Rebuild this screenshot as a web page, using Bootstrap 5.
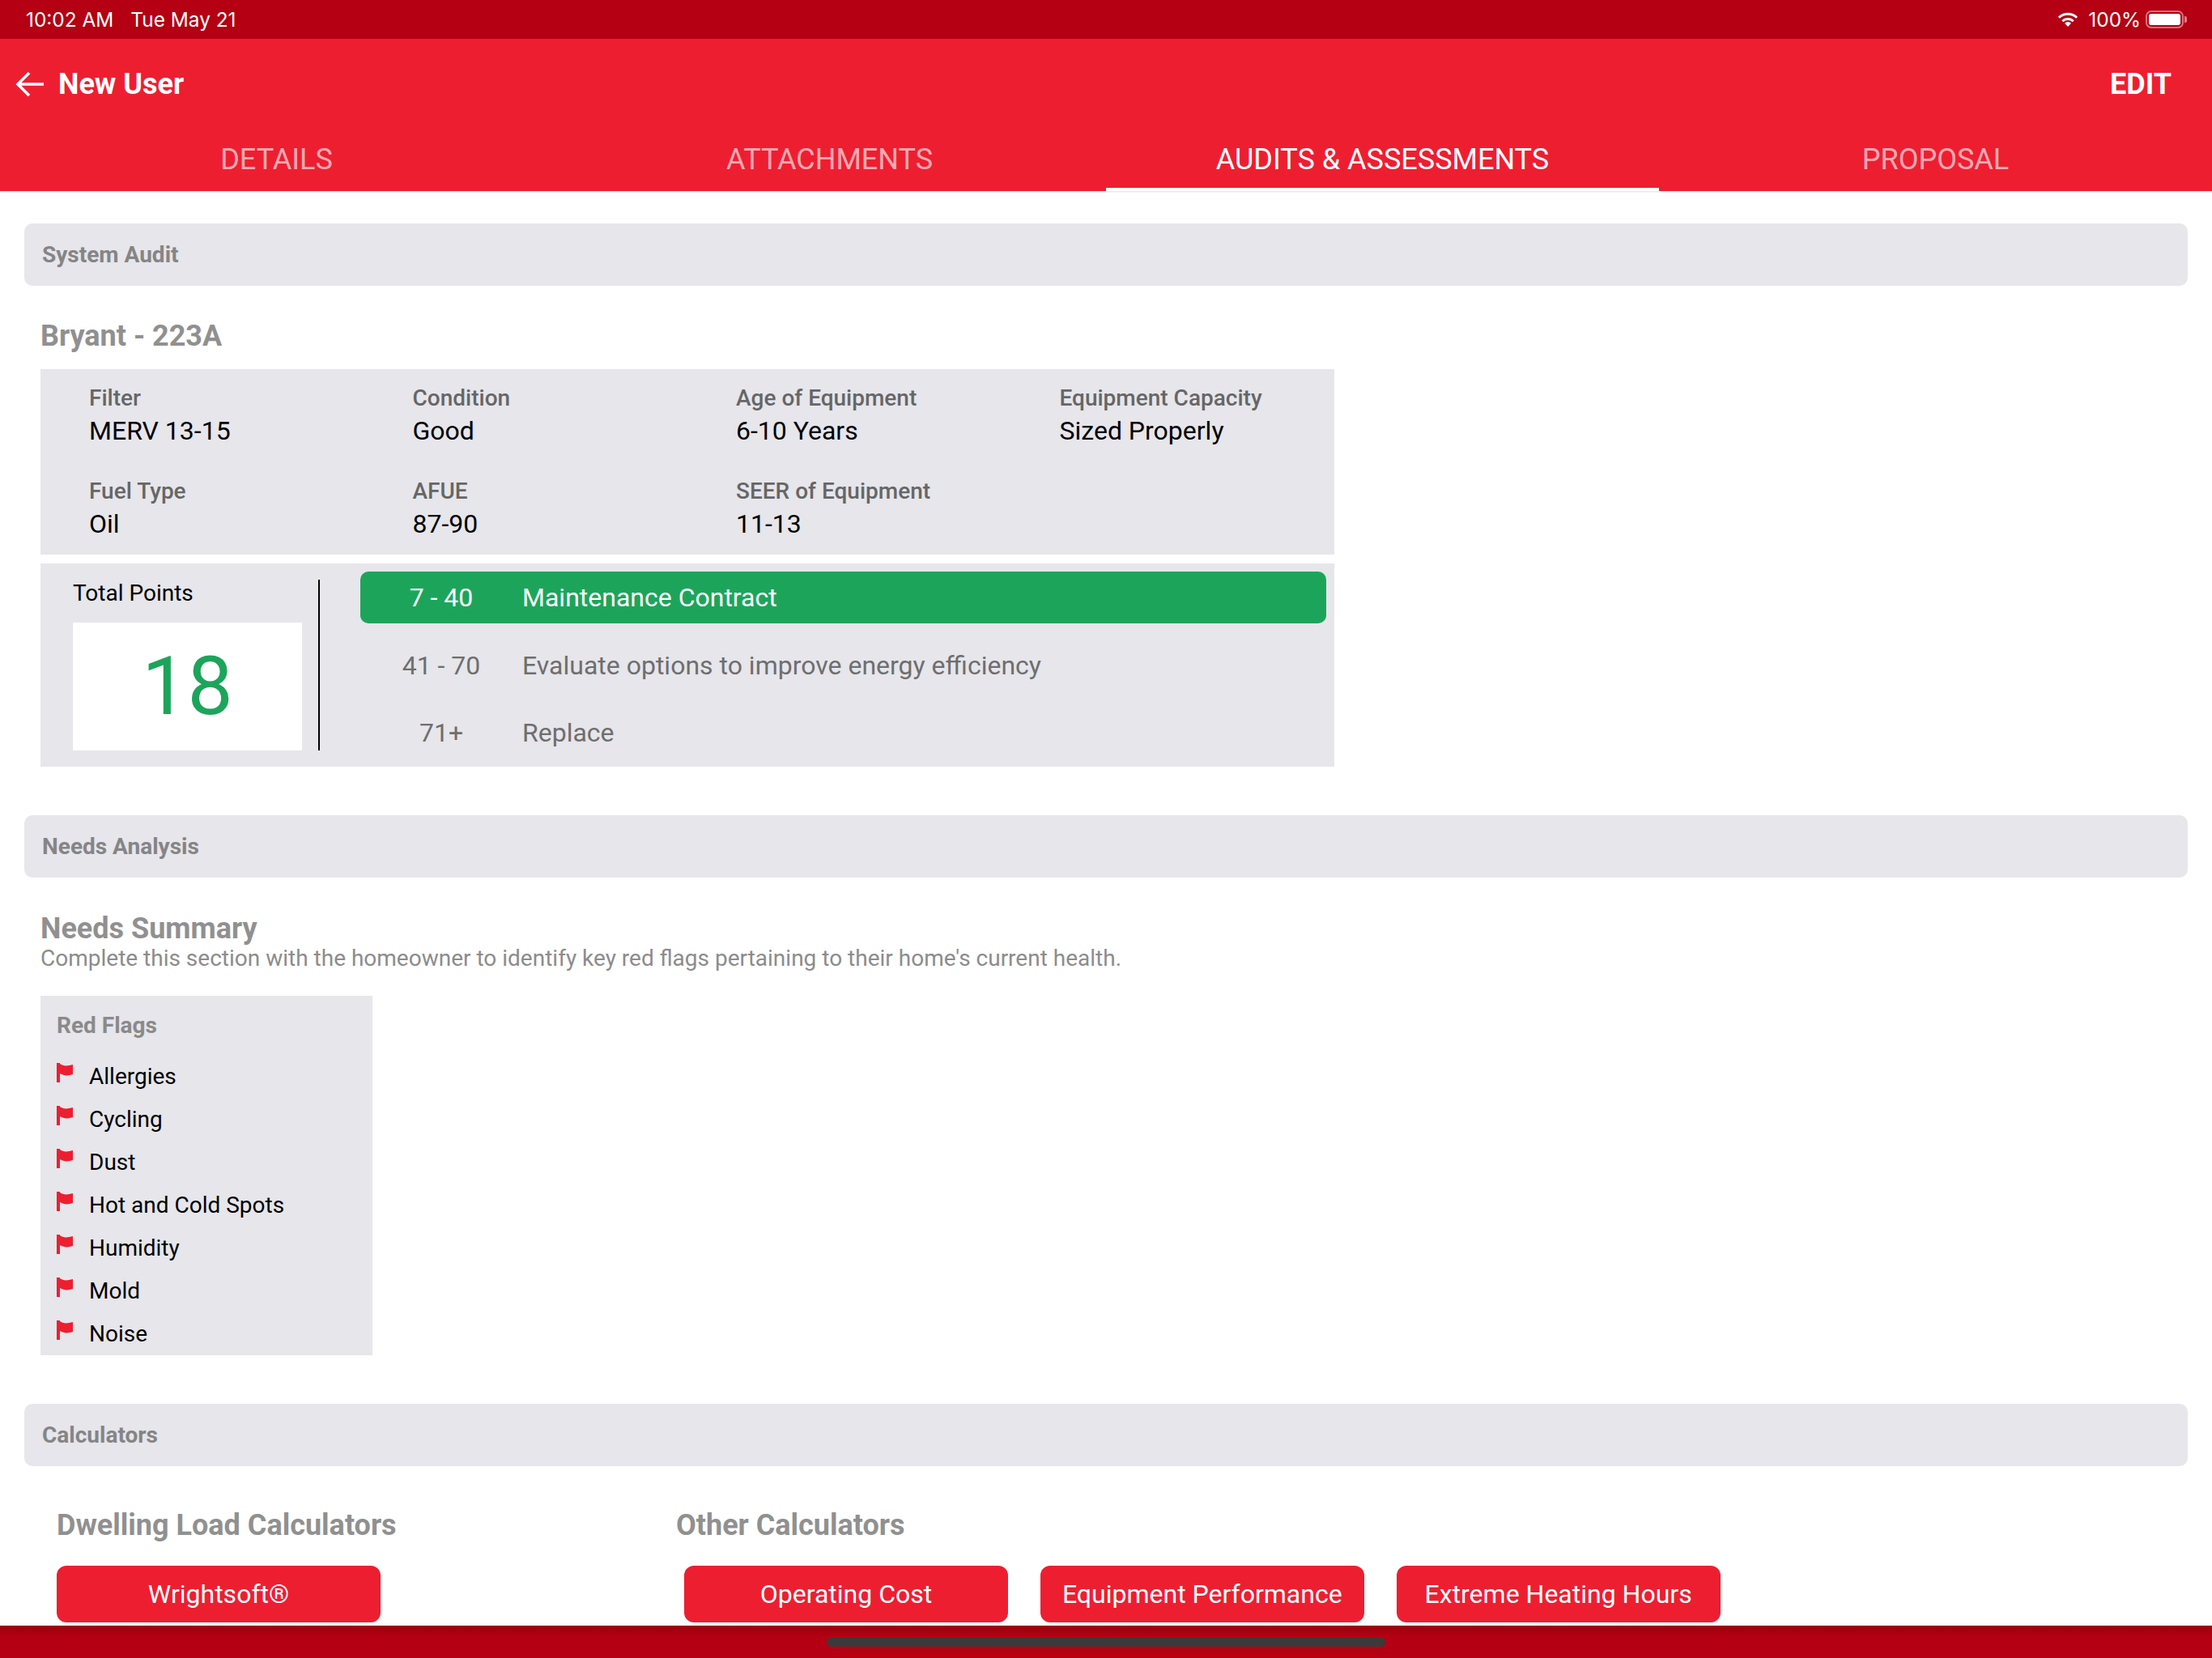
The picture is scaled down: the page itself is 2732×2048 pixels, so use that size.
<!DOCTYPE html>
<html lang="en">
<head>
    <meta charset="UTF-8">
    <meta name="viewport" content="width=device-width, initial-scale=1.0">
    <title>New User - Audits</title>
    <link rel="stylesheet" href="https://cdn.jsdelivr.net/npm/bootstrap@5.3.0/dist/css/bootstrap.min.css">
    <style>
        html, body { height: 2048px; overflow: hidden; }
        body { font-family: Roboto, "Liberation Sans", sans-serif; color: #000; background: #fff; }
        .app-frame { height: 2048px; }

        .status-strip { height: 48px; flex: none; background: #b40012; color: #fff; padding: 0 31px 0 32px; font-family: Inter, Roboto, sans-serif; font-size: 24.4px; }
        .gap-date { margin-left: 21px; }
        .wifi-ico { margin-right: 12px; }
        .batt { width: 47px; height: 22px; margin-left: 6px; border: 2px solid rgba(255,255,255,.45); border-radius: 7px; padding: 2px; }
        .batt i { display: block; height: 100%; background: #fff; border-radius: 3px; }
        .batt-tip { width: 3px; height: 8px; background: rgba(255,255,255,.5); border-radius: 0 2px 2px 0; margin-left: 1px; }

        .app-head { background: #ee1e31; color: #fff; height: 188px; flex: none; box-shadow: 0 1px 2px rgba(0,0,0,.12); }
        .title-row { height: 110px; padding: 1px 50px 0 19px; }
        .title-text { font-size: 36px; font-weight: 700; margin-left: 17px; }
        .edit-btn { font-size: 36px; font-weight: 700; color: #fff; text-decoration: none; }
        .tab-row { height: 78px; }
        .tab-item { flex: 1 1 25%; text-align: center; font-size: 36px; color: rgba(255,255,255,.65); text-decoration: none; padding-top: 12px; border-bottom: 4px solid transparent; }
        .tab-item.on { color: #fff; border-bottom-color: #fff; }

        .page-body { padding: 40px 30px 0; overflow: hidden; min-height: 0; }
        .sect-bar { height: 77px; background: #e6e6eb; border-radius: 10px; padding: 0 22px; font-size: 28px; font-weight: 700; color: #858585; display: flex; align-items: center; }
        .sect-next { margin-top: 60px; }
        .sub-title { font-size: 36px; font-weight: 700; color: #909090; line-height: 42px; }
        .sub-inset { margin-left: 20px; }
        .audit-title { margin-top: 41px; }
        .needs-title { margin-top: 42px; }

        .grey-box { background: #e6e6eb; margin-left: 20px; }
        .spec-box { width: 1598px; height: 229px; margin-top: 20px; padding: 17px 0 0 60px; display: grid; grid-template-columns: 399.5px 399.5px 399.5px 1fr; grid-auto-rows: 115px; }
        .spec-label { font-size: 28px; font-weight: 500; color: #666; line-height: 38px; }
        .spec-value { font-size: 32px; line-height: 42px; color: #000; }

        .points-box { width: 1598px; height: 251px; margin-top: 11px; padding: 10px 10px 20px 40px; }
        .points-col { width: 283px; padding-top: 8px; }
        .points-label { font-size: 28px; line-height: 38px; }
        .points-num { height: 158px; margin-top: 17px; background: #fff; color: #1ca55a; font-size: 100px; font-weight: 400; line-height: 1; }
        .points-rule { width: 2px; background: #000; margin: 10px 50px 0 20px; }
        .range-row { height: 64px; margin-bottom: 19.5px; color: #6e6e6e; font-size: 32px; border-radius: 10px; }
        .range-row.hit { background: #1ca55a; color: #fff; }
        .range-num { width: 200px; text-align: center; }

        .sub-note { font-size: 28px; color: #8c8c8c; line-height: 36px; margin-top: -2px; }
        .flag-box { width: 410px; height: 444px; margin-top: 28px; padding: 19px 20px 0; }
        .flag-head { font-size: 28px; font-weight: 700; color: #8a8a8a; line-height: 36px; margin-bottom: 18px; }
        .flag-row { height: 53px; font-size: 28px; }
        .flag-row svg { width: 20px; height: 24px; margin-right: 20px; margin-top: -10px; }

        .calc-wrap { margin-top: 52px; padding-left: 40px; }
        .calc-left { width: 765px; }
        .calc-top { margin-top: 29px; }
        .calc-btn { width: 400px; height: 70px; background: #ee1e31; border: 0; border-radius: 12px; color: #fff; font-size: 32px; padding: 0; }
        .calc-btn:hover { background: #ee1e31; color: #fff; }
        .calc-gap { gap: 39.8px; margin-left: 10px; }

        .bottom-strip { height: 40px; background: linear-gradient(#9a0010, #b40012 35%); flex: none; }
        .home-pill { width: 690px; height: 11px; background: #3a3a3a; border-radius: 6px; }
    </style>
</head>
<body>
<div class="app-frame d-flex flex-column">

    <div class="status-strip d-flex align-items-center justify-content-between">
        <div><span>10:02 AM</span><span class="gap-date">Tue May 21</span></div>
        <div class="d-flex align-items-center">
            <svg class="wifi-ico" width="26" height="18" viewBox="0 0 26 18"><path d="M13 18l-4-4.2a5.6 5.6 0 0 1 8 0z" fill="#fff"/><path d="M6.3 11.2a9.6 9.6 0 0 1 13.4 0" stroke="#fff" stroke-width="2.8" fill="none"/><path d="M1.9 6.8a15.8 15.8 0 0 1 22.2 0" stroke="#fff" stroke-width="2.8" fill="none"/></svg>
            <span>100%</span>
            <div class="batt"><i></i></div>
            <div class="batt-tip"></div>
        </div>
    </div>

    <div class="app-head">
        <div class="title-row d-flex align-items-center justify-content-between">
            <div class="d-flex align-items-center">
                <svg width="36" height="32" viewBox="0 0 36 32"><path d="M17 2L3 16l14 14M3 16h32" stroke="#fff" stroke-width="3.6" fill="none"/></svg>
                <span class="title-text">New User</span>
            </div>
            <a class="edit-btn" href="#">EDIT</a>
        </div>
        <div class="tab-row d-flex">
            <a class="tab-item" href="#">DETAILS</a>
            <a class="tab-item" href="#">ATTACHMENTS</a>
            <a class="tab-item on" href="#">AUDITS &amp; ASSESSMENTS</a>
            <a class="tab-item" href="#">PROPOSAL</a>
        </div>
    </div>

    <div class="page-body flex-grow-1">
        <div class="sect-bar">System Audit</div>
        <div class="sub-title sub-inset audit-title">Bryant - 223A</div>

        <div class="grey-box spec-box">
            <div><div class="spec-label">Filter</div><div class="spec-value">MERV 13-15</div></div>
            <div><div class="spec-label">Condition</div><div class="spec-value">Good</div></div>
            <div><div class="spec-label">Age of Equipment</div><div class="spec-value">6-10 Years</div></div>
            <div><div class="spec-label">Equipment Capacity</div><div class="spec-value">Sized Properly</div></div>
            <div><div class="spec-label">Fuel Type</div><div class="spec-value">Oil</div></div>
            <div><div class="spec-label">AFUE</div><div class="spec-value">87-90</div></div>
            <div><div class="spec-label">SEER of Equipment</div><div class="spec-value">11-13</div></div>
        </div>

        <div class="grey-box points-box d-flex">
            <div class="points-col">
                <div class="points-label">Total Points</div>
                <div class="points-num d-flex align-items-center justify-content-center">18</div>
            </div>
            <div class="points-rule"></div>
            <div class="flex-grow-1">
                <div class="range-row hit d-flex align-items-center"><div class="range-num">7 - 40</div>Maintenance Contract</div>
                <div class="range-row d-flex align-items-center"><div class="range-num">41 - 70</div>Evaluate options to improve energy efficiency</div>
                <div class="range-row d-flex align-items-center"><div class="range-num">71+</div>Replace</div>
            </div>
        </div>

        <div class="sect-bar sect-next">Needs Analysis</div>
        <div class="sub-title sub-inset needs-title">Needs Summary</div>
        <div class="sub-note sub-inset">Complete this section with the homeowner to identify key red flags pertaining to their home's current health.</div>

        <div class="grey-box flag-box">
            <div class="flag-head">Red Flags</div>
            <div class="flag-row d-flex align-items-center"><svg viewBox="0 0 20 24"><path d="M0 0h4v1c4 3 9 3 16 1v12c-6 2-11 2-16-1v11H0z" fill="#ee1e31"/></svg>Allergies</div>
            <div class="flag-row d-flex align-items-center"><svg viewBox="0 0 20 24"><path d="M0 0h4v1c4 3 9 3 16 1v12c-6 2-11 2-16-1v11H0z" fill="#ee1e31"/></svg>Cycling</div>
            <div class="flag-row d-flex align-items-center"><svg viewBox="0 0 20 24"><path d="M0 0h4v1c4 3 9 3 16 1v12c-6 2-11 2-16-1v11H0z" fill="#ee1e31"/></svg>Dust</div>
            <div class="flag-row d-flex align-items-center"><svg viewBox="0 0 20 24"><path d="M0 0h4v1c4 3 9 3 16 1v12c-6 2-11 2-16-1v11H0z" fill="#ee1e31"/></svg>Hot and Cold Spots</div>
            <div class="flag-row d-flex align-items-center"><svg viewBox="0 0 20 24"><path d="M0 0h4v1c4 3 9 3 16 1v12c-6 2-11 2-16-1v11H0z" fill="#ee1e31"/></svg>Humidity</div>
            <div class="flag-row d-flex align-items-center"><svg viewBox="0 0 20 24"><path d="M0 0h4v1c4 3 9 3 16 1v12c-6 2-11 2-16-1v11H0z" fill="#ee1e31"/></svg>Mold</div>
            <div class="flag-row d-flex align-items-center"><svg viewBox="0 0 20 24"><path d="M0 0h4v1c4 3 9 3 16 1v12c-6 2-11 2-16-1v11H0z" fill="#ee1e31"/></svg>Noise</div>
        </div>

        <div class="sect-bar sect-next">Calculators</div>
        <div class="calc-wrap d-flex">
            <div class="calc-left">
                <div class="sub-title">Dwelling Load Calculators</div>
                <button class="btn calc-btn calc-top">Wrightsoft®</button>
            </div>
            <div>
                <div class="sub-title">Other Calculators</div>
                <div class="calc-gap calc-top d-flex">
                    <button class="btn calc-btn">Operating Cost</button>
                    <button class="btn calc-btn">Equipment Performance</button>
                    <button class="btn calc-btn">Extreme Heating Hours</button>
                </div>
            </div>
        </div>
    </div>

    <div class="bottom-strip d-flex justify-content-center align-items-center">
        <div class="home-pill"></div>
    </div>
</div>
<script src="https://cdn.jsdelivr.net/npm/bootstrap@5.3.0/dist/js/bootstrap.bundle.min.js"></script>
</body>
</html>
